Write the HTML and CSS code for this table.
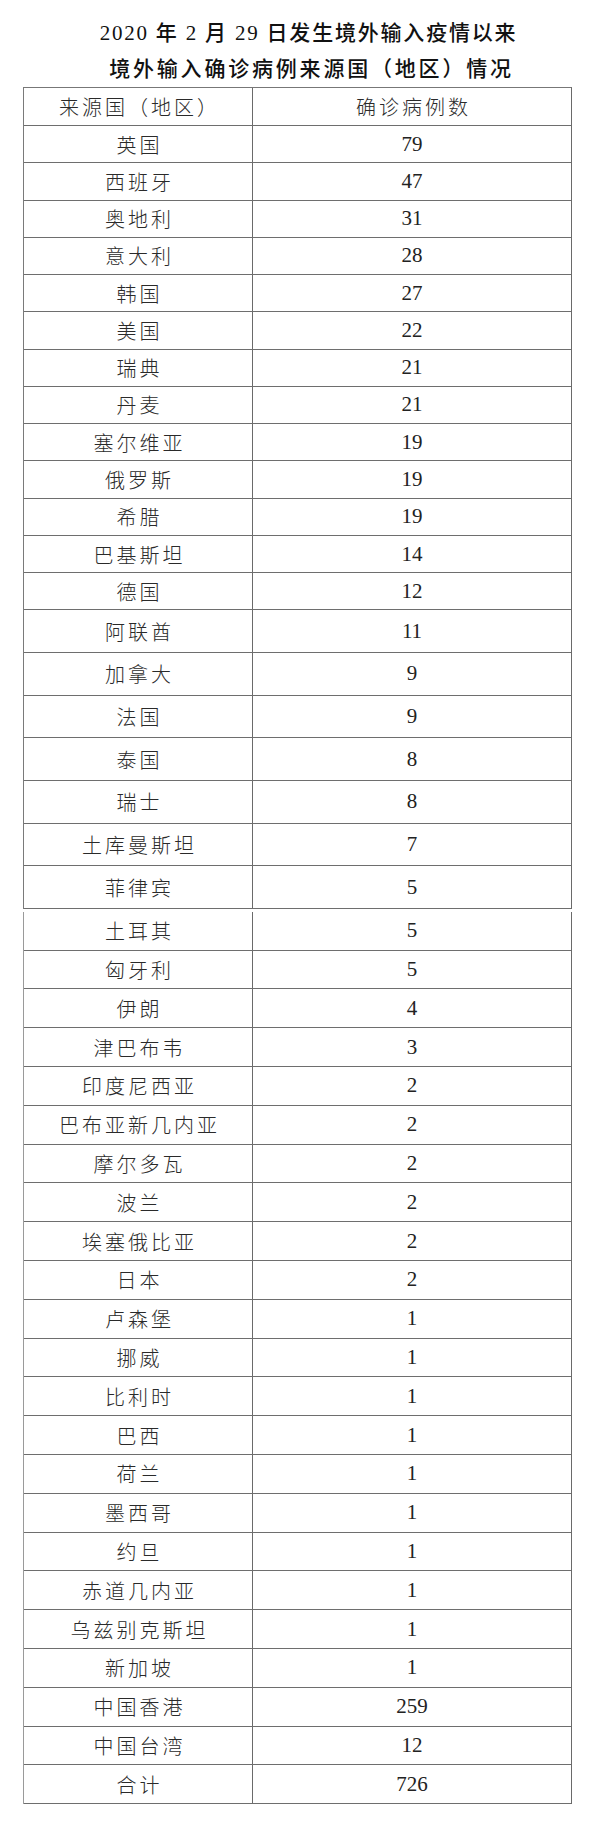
FILE: index.html
```html
<!DOCTYPE html>
<html lang="zh-CN">
<head>
<meta charset="utf-8">
<title>境外输入确诊病例来源国（地区）情况</title>
<link rel="stylesheet" href="styles.css">
</head>
<body>
<div class="page">
  <div class="title">
    <div class="t1">2020 年 2 月 29 日发生境外输入疫情以来</div>
    <div class="t2">境外输入确诊病例来源国（地区）情况</div>
  </div>

  <div class="sheet part1">
    <div class="row head"><div class="c1">来源国（地区）</div><div class="c2 cj">确诊病例数</div></div>
    <div class="row s1"><div class="c1">英国</div><div class="c2">79</div></div>
    <div class="row s1"><div class="c1">西班牙</div><div class="c2">47</div></div>
    <div class="row s1"><div class="c1">奥地利</div><div class="c2">31</div></div>
    <div class="row s1"><div class="c1">意大利</div><div class="c2">28</div></div>
    <div class="row s1"><div class="c1">韩国</div><div class="c2">27</div></div>
    <div class="row s1"><div class="c1">美国</div><div class="c2">22</div></div>
    <div class="row s1"><div class="c1">瑞典</div><div class="c2">21</div></div>
    <div class="row s1"><div class="c1">丹麦</div><div class="c2">21</div></div>
    <div class="row s1"><div class="c1">塞尔维亚</div><div class="c2">19</div></div>
    <div class="row s1"><div class="c1">俄罗斯</div><div class="c2">19</div></div>
    <div class="row s1"><div class="c1">希腊</div><div class="c2">19</div></div>
    <div class="row s1"><div class="c1">巴基斯坦</div><div class="c2">14</div></div>
    <div class="row s1"><div class="c1">德国</div><div class="c2">12</div></div>
    <div class="row s2"><div class="c1">阿联酋</div><div class="c2">11</div></div>
    <div class="row s2"><div class="c1">加拿大</div><div class="c2">9</div></div>
    <div class="row s2"><div class="c1">法国</div><div class="c2">9</div></div>
    <div class="row s2"><div class="c1">泰国</div><div class="c2">8</div></div>
    <div class="row s2"><div class="c1">瑞士</div><div class="c2">8</div></div>
    <div class="row s2"><div class="c1">土库曼斯坦</div><div class="c2">7</div></div>
    <div class="row s2"><div class="c1">菲律宾</div><div class="c2">5</div></div>
  </div>

  <div class="sheet part2">
    <div class="row s3"><div class="c1">土耳其</div><div class="c2">5</div></div>
    <div class="row s3"><div class="c1">匈牙利</div><div class="c2">5</div></div>
    <div class="row s3"><div class="c1">伊朗</div><div class="c2">4</div></div>
    <div class="row s3"><div class="c1">津巴布韦</div><div class="c2">3</div></div>
    <div class="row s3"><div class="c1">印度尼西亚</div><div class="c2">2</div></div>
    <div class="row s3"><div class="c1">巴布亚新几内亚</div><div class="c2">2</div></div>
    <div class="row s3"><div class="c1">摩尔多瓦</div><div class="c2">2</div></div>
    <div class="row s3"><div class="c1">波兰</div><div class="c2">2</div></div>
    <div class="row s3"><div class="c1">埃塞俄比亚</div><div class="c2">2</div></div>
    <div class="row s3"><div class="c1">日本</div><div class="c2">2</div></div>
    <div class="row s3"><div class="c1">卢森堡</div><div class="c2">1</div></div>
    <div class="row s3"><div class="c1">挪威</div><div class="c2">1</div></div>
    <div class="row s3"><div class="c1">比利时</div><div class="c2">1</div></div>
    <div class="row s3"><div class="c1">巴西</div><div class="c2">1</div></div>
    <div class="row s3"><div class="c1">荷兰</div><div class="c2">1</div></div>
    <div class="row s3"><div class="c1">墨西哥</div><div class="c2">1</div></div>
    <div class="row s3"><div class="c1">约旦</div><div class="c2">1</div></div>
    <div class="row s3"><div class="c1">赤道几内亚</div><div class="c2">1</div></div>
    <div class="row s3"><div class="c1">乌兹别克斯坦</div><div class="c2">1</div></div>
    <div class="row s3"><div class="c1">新加坡</div><div class="c2">1</div></div>
    <div class="row s3"><div class="c1">中国香港</div><div class="c2">259</div></div>
    <div class="row s3"><div class="c1">中国台湾</div><div class="c2">12</div></div>
    <div class="row s3"><div class="c1">合计</div><div class="c2">726</div></div>
  </div>
</div>
</body>
</html>
```

FILE: styles.css
```css
html, body {
  margin: 0;
  padding: 0;
  background: #ffffff;
}

.page {
  width: 591px;
  height: 1825px;
  color: #1e1e1e;
  font-family: "Liberation Serif", "Noto Sans CJK SC", serif;
}

.title {
  padding-top: 15px;
  text-align: center;
  font-size: 21px;
  line-height: 36px;
  font-weight: 500;
  color: #111;
}

.t1 {
  letter-spacing: 1.8px;
  padding-left: 26px;
}

.t2 {
  letter-spacing: 2.8px;
  padding-left: 32px;
}

.sheet {
  margin-left: 23px;
  width: 549px;
  box-sizing: border-box;
  border-left: 1px solid #7a7a7a;
  border-right: 1px solid #6a6a6a;
}

.part1 {
  border-top: 1px solid #777;
}

.part2 {
  margin-top: 3px;
  border-left-color: #9a9a9a;
}

.row {
  display: grid;
  grid-template-columns: 229px 1fr;
  box-sizing: border-box;
  border-bottom: 1px solid #6e6e6e;
}

.head { height: 38px; }
.s1 { height: 37.27px; }
.s2 { height: 42.64px; }
.s3 { height: 38.8px; }

.c1, .c2 {
  display: flex;
  align-items: center;
  justify-content: center;
}

.c1 {
  border-right: 1px solid #6a6a6a;
  font-family: "Noto Sans CJK SC", sans-serif;
  font-weight: 300;
  font-size: 20px;
  letter-spacing: 3px;
  padding-left: 3px;
  color: #2a2a2a;
}

.c2 {
  font-family: "Liberation Serif", serif;
  font-size: 21px;
  color: #222;
}

.c2.cj {
  font-family: "Noto Sans CJK SC", sans-serif;
  font-weight: 300;
  font-size: 20px;
  letter-spacing: 3px;
  padding-left: 3px;
  color: #2a2a2a;
}
```
